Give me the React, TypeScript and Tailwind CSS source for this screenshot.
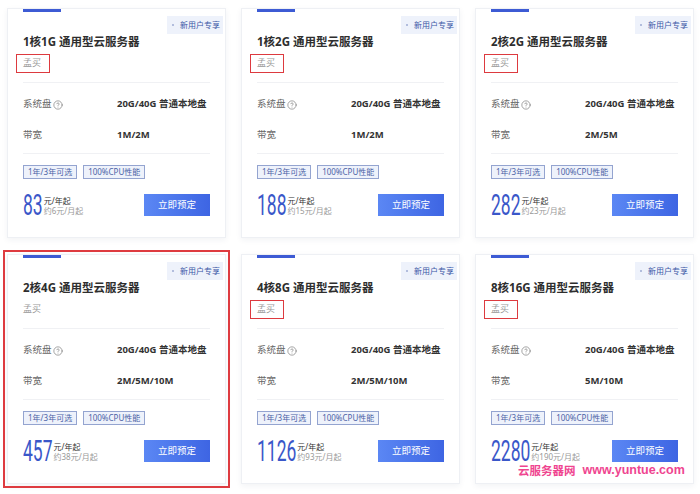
import { CircleHelp } from "lucide-react";
import clsx from "clsx";

type Plan = {
  title: string;
  bandwidth: string;
  price: string;
  monthly: string;
  marked: boolean;
  highlight?: boolean;
};

const plans: Plan[] = [
  { title: "1核1G 通用型云服务器", bandwidth: "1M/2M", price: "83", monthly: "约6元/月起", marked: true },
  { title: "1核2G 通用型云服务器", bandwidth: "1M/2M", price: "188", monthly: "约15元/月起", marked: true },
  { title: "2核2G 通用型云服务器", bandwidth: "2M/5M", price: "282", monthly: "约23元/月起", marked: true },
  { title: "2核4G 通用型云服务器", bandwidth: "2M/5M/10M", price: "457", monthly: "约38元/月起", marked: false, highlight: true },
  { title: "4核8G 通用型云服务器", bandwidth: "2M/5M/10M", price: "1126", monthly: "约93元/月起", marked: true },
  { title: "8核16G 通用型云服务器", bandwidth: "5M/10M", price: "2280", monthly: "约190元/月起", marked: true },
];

export default function App() {
  return (
    <div className="relative h-[494px] w-[700px] overflow-hidden bg-white font-['Noto_Sans','Noto_Sans_CJK_SC',sans-serif]">
      <div className="grid grid-cols-[219px_219px_219px] gap-x-[15px] gap-y-4 pl-[7px] pt-2">
        {plans.map((p) => (
          <PlanCard key={p.title} plan={p} />
        ))}
      </div>

      {/* watermark */}
      <div className="absolute left-[518px] top-[462px] flex items-center gap-[7px] leading-[17px] text-[#ef4590]">
        <span className="text-[11.5px] font-bold">云服务器网</span>
        <span className="font-['Liberation_Sans',sans-serif] text-[12.5px] font-bold">www.yuntue.com</span>
      </div>
    </div>
  );
}

function PlanCard({ plan }: { plan: Plan }) {
  return (
    <div
      className={clsx(
        "relative h-[230px] border border-[#eef0f4] bg-white px-[15px] shadow-[0_2px_6px_rgba(40,50,90,0.06)]",
        plan.highlight && "outline-2 outline-offset-2 outline-[#de3b40]"
      )}
    >
      <div className="h-[3px] w-[38px] bg-[#3d5bd4]" />

      {/* Badge */}
      <div className="absolute right-[2px] top-[7px] flex h-[18px] items-center gap-[6px] bg-[#eef2fb] pl-[5px] pr-[3px] text-[8px] text-[#3b57a6]">
        <span className="h-[2px] w-[2px] rounded-full bg-[#9eabd3]" />
        新用户专享
      </div>

      <h3 className="mt-[21px] whitespace-nowrap text-[11.5px] font-bold leading-[18px] text-[#2e2e2e]">{plan.title}</h3>

      <div className="mt-1 flex h-4 items-center text-[9px] text-[#999]">
        {plan.marked ? (
          <span className="-ml-[7px] flex h-[19px] items-center border border-[#dd3a3f] pl-[6px] pr-[8px]">孟买</span>
        ) : (
          <span>孟买</span>
        )}
      </div>

      <div className="mt-[11px] border-y border-[#f0f1f4] pb-[2px] pt-[6px]">
        <SpecRow label="系统盘" help value="20G/40G 普通本地盘" />
        <SpecRow label="带宽" value={plan.bandwidth} />
      </div>

      <div className="mt-[11px] flex gap-[6px]">
        {["1年/3年可选", "100%CPU性能"].map((t) => (
          <span
            key={t}
            className="flex h-[14px] items-center whitespace-nowrap border border-[#94a4d0] bg-[#eef2fb] px-[4px] text-[8px] text-[#4c63a6]"
          >
            {t}
          </span>
        ))}
      </div>

      <div className="mt-[14px] flex h-6 items-center justify-between">
        <div className="flex h-6 items-end">
          <span className="flex h-6 items-center">
            <span className="inline-block scale-y-[1.65] font-['Roboto',sans-serif] text-[17.5px] leading-[18px] text-[#3a57c9]">
              {plan.price}
            </span>
          </span>
          <div className="ml-[1px] whitespace-nowrap pb-[1px] text-[8px] leading-[10px]">
            <div className="text-[#333]">元/年起</div>
            <div className="text-[#999]">{plan.monthly}</div>
          </div>
        </div>
        <button className="h-[22px] w-[66px] bg-linear-to-r from-[#5b87f4] to-[#3e65e3] text-[9.5px] text-white">
          立即预定
        </button>
      </div>
    </div>
  );
}

function SpecRow({ label, value, help }: { label: string; value: string; help?: boolean }) {
  return (
    <div className="flex h-[31px] items-center whitespace-nowrap">
      <span className="flex w-[94px] shrink-0 items-center gap-[1px] text-[9.5px] text-[#666]">
        {label}
        {help && <CircleHelp size={10} strokeWidth={1.4} />}
      </span>
      <span className="text-[9.5px] font-bold text-[#333]">{value}</span>
    </div>
  );
}
